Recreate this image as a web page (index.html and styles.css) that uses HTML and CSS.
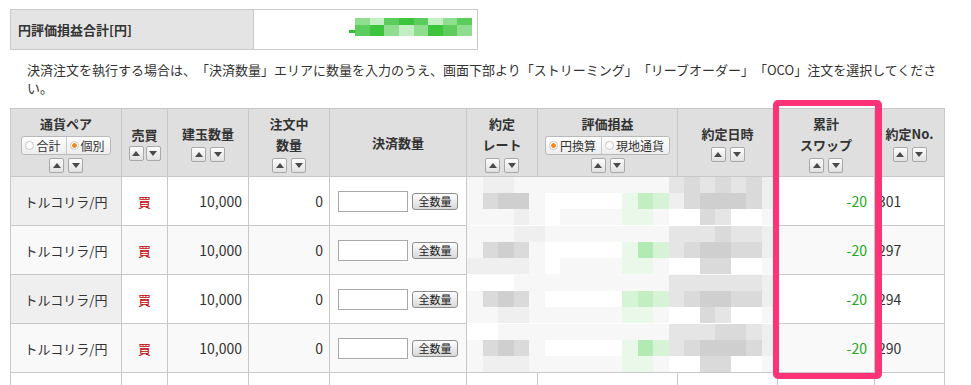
FILE: index.html
```html
<!DOCTYPE html>
<html lang="ja">
<head>
<meta charset="utf-8">
<title>建玉一覧</title>
<link rel="stylesheet" href="styles.css">
</head>
<body>
<div class="summary">
  <div class="sum-label">円評価損益合計[円]</div>
  <div class="sum-value">
    <span class="dash"></span>
    <div class="pix">
      <i class="p1"></i><i class="p3"></i><i class="p2"></i><i class="p4"></i><i class="p2"></i><i class="p3"></i><i class="p1"></i><i class="p2"></i>
      <i class="p2"></i><i class="p4"></i><i class="p1"></i><i class="p3"></i><i class="p1"></i><i class="p4"></i><i class="p2"></i><i class="p1"></i>
    </div>
  </div>
</div>

<p class="note">決済注文を執行する場合は、「決済数量」エリアに数量を入力のうえ、画面下部より「ストリーミング」「リーブオーダー」「OCO」注文を選択してください。</p>

<div class="board">
  <table class="positions">
    <colgroup>
      <col class="c-pair"><col class="c-side"><col class="c-qty"><col class="c-ord"><col class="c-settle">
      <col class="c-rate"><col class="c-pl"><col class="c-date"><col class="c-swap"><col class="c-no">
    </colgroup>
    <thead>
      <tr>
        <th>
          <div class="ttl">通貨ペア</div>
          <div class="seg"><span><b class="dot"></b>合計</span><span><b class="dot on"></b>個別</span></div>
          <div class="sort"><i class="up"></i><i class="down"></i></div>
        </th>
        <th>
          <div class="ttl">売買</div>
          <div class="sort tight"><i class="up"></i><i class="down"></i></div>
        </th>
        <th>
          <div class="ttl">建玉数量</div>
          <div class="sort"><i class="up"></i><i class="down"></i></div>
        </th>
        <th>
          <div class="ttl">注文中<br>数量</div>
          <div class="sort"><i class="up"></i><i class="down"></i></div>
        </th>
        <th>
          <div class="ttl">決済数量</div>
        </th>
        <th>
          <div class="ttl">約定<br>レート</div>
          <div class="sort"><i class="up"></i><i class="down"></i></div>
        </th>
        <th>
          <div class="ttl">評価損益</div>
          <div class="seg"><span><b class="dot on"></b>円換算</span><span><b class="dot"></b>現地通貨</span></div>
          <div class="sort"><i class="up"></i><i class="down"></i></div>
        </th>
        <th>
          <div class="ttl">約定日時</div>
          <div class="sort"><i class="up"></i><i class="down"></i></div>
        </th>
        <th>
          <div class="ttl">累計<br>スワップ</div>
          <div class="sort"><i class="up"></i><i class="down"></i></div>
        </th>
        <th>
          <div class="ttl">約定No.</div>
          <div class="sort"><i class="up"></i><i class="down"></i></div>
        </th>
      </tr>
    </thead>
    <tbody>
      <tr>
        <td class="pair">トルコリラ/円</td>
        <td class="side">買</td>
        <td class="num">10,000</td>
        <td class="num">0</td>
        <td class="settle"><div class="settle-box"><input class="qty" type="text"><button class="all" type="button">全数量</button></div></td>
        <td class="mosaic join" colspan="3"><div class="mz">
          <i class="a"></i><i class="b"></i><i class="b"></i><i class="a"></i><i class="a"></i><i class="a"></i><i class="a"></i><i class="a"></i><i class="a"></i><i class="a"></i><i class="a"></i><i class="a"></i><i class="a"></i><i class="c"></i><i class="d"></i><i class="c"></i><i class="d"></i><i class="c"></i><i class="d"></i><i class="b"></i>
          <i class="a"></i><i class="d"></i><i class="e"></i><i class="e"></i><i class="a"></i><i class="w"></i><i class="w"></i><i class="w"></i><i class="w"></i><i class="w"></i><i class="g"></i><i class="k"></i><i class="h"></i><i class="b"></i><i class="d"></i><i class="e"></i><i class="e"></i><i class="e"></i><i class="d"></i><i class="b"></i>
          <i class="a"></i><i class="a"></i><i class="a"></i><i class="b"></i><i class="a"></i><i class="w"></i><i class="a"></i><i class="a"></i><i class="a"></i><i class="a"></i><i class="g"></i><i class="g"></i><i class="a"></i><i class="w"></i><i class="w"></i><i class="d"></i><i class="c"></i><i class="w"></i><i class="w"></i><i class="a"></i>
        </div></td>
        <td class="swap">-20</td>
        <td class="no">301</td>
      </tr>
      <tr>
        <td class="pair">トルコリラ/円</td>
        <td class="side">買</td>
        <td class="num">10,000</td>
        <td class="num">0</td>
        <td class="settle"><div class="settle-box"><input class="qty" type="text"><button class="all" type="button">全数量</button></div></td>
        <td class="mosaic join" colspan="3"><div class="mz">
          <i class="a"></i><i class="a"></i><i class="a"></i><i class="b"></i><i class="b"></i><i class="a"></i><i class="a"></i><i class="a"></i><i class="a"></i><i class="a"></i><i class="a"></i><i class="a"></i><i class="a"></i><i class="c"></i><i class="c"></i><i class="c"></i><i class="d"></i><i class="c"></i><i class="c"></i><i class="b"></i>
          <i class="a"></i><i class="d"></i><i class="e"></i><i class="d"></i><i class="a"></i><i class="w"></i><i class="w"></i><i class="w"></i><i class="w"></i><i class="w"></i><i class="g"></i><i class="m"></i><i class="h"></i><i class="c"></i><i class="d"></i><i class="e"></i><i class="e"></i><i class="d"></i><i class="d"></i><i class="b"></i>
          <i class="b"></i><i class="b"></i><i class="b"></i><i class="b"></i><i class="a"></i><i class="w"></i><i class="a"></i><i class="a"></i><i class="a"></i><i class="a"></i><i class="g"></i><i class="g"></i><i class="a"></i><i class="w"></i><i class="w"></i><i class="d"></i><i class="d"></i><i class="w"></i><i class="w"></i><i class="a"></i>
        </div></td>
        <td class="swap">-20</td>
        <td class="no">297</td>
      </tr>
      <tr>
        <td class="pair">トルコリラ/円</td>
        <td class="side">買</td>
        <td class="num">10,000</td>
        <td class="num">0</td>
        <td class="settle"><div class="settle-box"><input class="qty" type="text"><button class="all" type="button">全数量</button></div></td>
        <td class="mosaic join" colspan="3"><div class="mz">
          <i class="w"></i><i class="w"></i><i class="w"></i><i class="a"></i><i class="a"></i><i class="a"></i><i class="a"></i><i class="a"></i><i class="a"></i><i class="a"></i><i class="a"></i><i class="a"></i><i class="a"></i><i class="c"></i><i class="c"></i><i class="c"></i><i class="c"></i><i class="c"></i><i class="c"></i><i class="b"></i>
          <i class="a"></i><i class="d"></i><i class="e"></i><i class="d"></i><i class="a"></i><i class="w"></i><i class="w"></i><i class="w"></i><i class="w"></i><i class="w"></i><i class="h"></i><i class="k"></i><i class="h"></i><i class="c"></i><i class="d"></i><i class="e"></i><i class="e"></i><i class="d"></i><i class="d"></i><i class="b"></i>
          <i class="a"></i><i class="a"></i><i class="b"></i><i class="b"></i><i class="a"></i><i class="a"></i><i class="a"></i><i class="a"></i><i class="a"></i><i class="a"></i><i class="g"></i><i class="g"></i><i class="a"></i><i class="w"></i><i class="w"></i><i class="d"></i><i class="c"></i><i class="w"></i><i class="w"></i><i class="a"></i>
        </div></td>
        <td class="swap">-20</td>
        <td class="no">294</td>
      </tr>
      <tr>
        <td class="pair">トルコリラ/円</td>
        <td class="side">買</td>
        <td class="num">10,000</td>
        <td class="num">0</td>
        <td class="settle"><div class="settle-box"><input class="qty" type="text"><button class="all" type="button">全数量</button></div></td>
        <td class="mosaic" colspan="3"><div class="mz">
          <i class="w"></i><i class="w"></i><i class="a"></i><i class="a"></i><i class="a"></i><i class="a"></i><i class="a"></i><i class="a"></i><i class="a"></i><i class="a"></i><i class="a"></i><i class="a"></i><i class="a"></i><i class="c"></i><i class="c"></i><i class="c"></i><i class="d"></i><i class="d"></i><i class="c"></i><i class="b"></i>
          <i class="a"></i><i class="d"></i><i class="e"></i><i class="d"></i><i class="a"></i><i class="w"></i><i class="w"></i><i class="w"></i><i class="w"></i><i class="w"></i><i class="g"></i><i class="m"></i><i class="h"></i><i class="c"></i><i class="d"></i><i class="e"></i><i class="e"></i><i class="e"></i><i class="d"></i><i class="b"></i>
          <i class="a"></i><i class="b"></i><i class="b"></i><i class="b"></i><i class="a"></i><i class="a"></i><i class="a"></i><i class="a"></i><i class="a"></i><i class="a"></i><i class="g"></i><i class="g"></i><i class="a"></i><i class="w"></i><i class="w"></i><i class="d"></i><i class="d"></i><i class="w"></i><i class="w"></i><i class="a"></i>
        </div></td>
        <td class="swap">-20</td>
        <td class="no">290</td>
      </tr>
      <tr class="more">
        <td></td><td></td><td></td><td></td><td></td>
        <td></td><td></td><td></td><td></td><td></td>
      </tr>
    </tbody>
  </table>
  <div class="highlight"></div>
</div>
</body>
</html>
```

FILE: styles.css
```css
body {
  margin: 9px 10px 0;
  font-family: "Noto Sans CJK JP", "Noto Sans", sans-serif;
  font-size: 13px;
  color: #333;
  background: #fff;
  text-spacing-trim: space-all;
}

/* total box */
.summary {
  display: flex;
  width: 468px;
  height: 41px;
  box-sizing: border-box;
  border: 1px solid #c9c9c9;
}
.sum-label {
  width: 243px;
  box-sizing: border-box;
  background: #e4e4e4;
  border-right: 1px solid #c9c9c9;
  font-weight: bold;
  display: flex;
  align-items: center;
  padding-left: 7px;
}
.sum-value {
  flex: 1;
  display: flex;
  justify-content: flex-end;
  align-items: flex-start;
  padding: 8px 5px 0 0;
}
.dash {
  width: 6px;
  height: 3px;
  margin-top: 12px;
  background: #2fbf2f;
}
.pix {
  width: 117px;
  height: 18px;
  display: grid;
  grid-template-columns: repeat(8, 1fr);
  grid-template-rows: 7px 11px;
}
.pix i { display: block; }
.pix .p1 { background: #8fdd8f; }
.pix .p2 { background: #5ccd5c; }
.pix .p3 { background: #c4eec4; }
.pix .p4 { background: #3cc43c; }

/* instruction text */
.note {
  margin: 11px 0 11px;
  padding-left: 17px;
  width: 916px;
  line-height: 18px;
}

/* position table */
.board {
  position: relative;
  width: 934px;
}
.positions {
  border-collapse: collapse;
  table-layout: fixed;
  width: 934px;
}
.c-pair { width: 111px; }
.c-side { width: 46px; }
.c-qty { width: 81px; }
.c-ord { width: 81px; }
.c-settle { width: 137px; }
.c-rate { width: 71px; }
.c-pl { width: 140px; }
.c-date { width: 100px; }
.c-swap { width: 97px; }
.c-no { width: 70px; }

.positions th,
.positions td {
  border: 1px solid #c8c8c8;
  padding: 0;
}
.positions th {
  height: 67px;
  background: #dfdfdf;
  font-weight: bold;
  text-align: center;
  vertical-align: middle;
  line-height: 21px;
}
.positions td {
  height: 48px;
  vertical-align: middle;
  background: #fff;
}
.positions tbody tr:nth-child(even) td {
  background: #f9f9f9;
}
.positions tbody td.pair {
  background: #efefef;
  text-align: center;
}
.positions tbody tr.more td {
  background: #fff;
}
.side {
  color: #c40000;
  text-align: center;
}
.num {
  text-align: right;
  font-size: 14px;
  padding-right: 6px !important;
}
.swap {
  color: #22a722;
  text-align: right;
  font-size: 14px;
  padding-right: 7px !important;
}
.no {
  font-size: 14px;
  padding-left: 3px !important;
}

/* sort arrows */
.sort {
  display: flex;
  justify-content: center;
  gap: 4px;
  margin-top: 3px;
}
.sort.tight { gap: 2px; margin-top: 1px; }
.sort i {
  width: 15px;
  height: 15px;
  box-sizing: border-box;
  border: 1px solid #a8a8a8;
  border-radius: 2px;
  background: linear-gradient(#fdfdfd, #e0e0e0);
  display: flex;
  align-items: center;
  justify-content: center;
}
.sort i::after {
  content: "";
  border-left: 4px solid transparent;
  border-right: 4px solid transparent;
}
.sort .up::after { border-bottom: 5px solid #4a4a4a; }
.sort .down::after { border-top: 5px solid #4a4a4a; }

/* toggle groups */
.seg {
  display: inline-flex;
  height: 19px;
  box-sizing: border-box;
  margin-top: 1px;
  border: 1px solid #b9b9b9;
  border-radius: 3px;
  background: linear-gradient(#fefefe, #ededed);
  font-weight: normal;
  font-size: 12px;
  line-height: 17px;
  color: #333;
}
.seg span {
  display: flex;
  align-items: center;
  gap: 2px;
  padding: 0 5px 0 3px;
}
.seg span + span { border-left: 1px solid #c9c9c9; }
.dot {
  width: 9px;
  height: 9px;
  box-sizing: border-box;
  border: 1px solid #c6c6c6;
  border-radius: 50%;
  background: #fff;
}
.dot.on {
  background: radial-gradient(circle, #f0871c 0 2px, #fff 2.6px);
}

/* settle quantity input */
.settle-box {
  display: flex;
  align-items: center;
  padding-left: 8px;
}
.qty {
  width: 70px;
  height: 21px;
  box-sizing: border-box;
  border: 1px solid #a9a9a9;
  background: #fff;
  margin: 0;
}
.all {
  width: 46px;
  height: 17px;
  margin: 0 0 0 4px;
  padding: 0;
  box-sizing: border-box;
  border: 1px solid #8e8e8e;
  border-radius: 3px;
  background: linear-gradient(#fefefe, #d8d8d8);
  font-family: inherit;
  font-size: 11px;
  line-height: 15px;
  color: #222;
}

/* masked rate / profit / date block */
.positions td.mosaic {
  background: #fff;
}
.positions td.mosaic.join {
  border-bottom-style: hidden;
}
.mz {
  display: grid;
  grid-template-columns: repeat(20, 1fr);
  grid-template-rows: repeat(3, 16px);
}
.mz i { display: block; }
.mz .w { background: #ffffff; }
.mz .a { background: #f7f7f7; }
.mz .b { background: #efefef; }
.mz .c { background: #e5e5e5; }
.mz .d { background: #dadada; }
.mz .e { background: #cfcfcf; }
.mz .g { background: #eaf8ea; }
.mz .h { background: #d6f3d6; }
.mz .k { background: #c2eec2; }
.mz .m { background: #b3eab3; }

/* column highlight frame */
.highlight {
  position: absolute;
  left: 763px;
  top: -8px;
  width: 109px;
  height: 279px;
  box-sizing: border-box;
  border: 6px solid #fe3377;
  border-right-width: 7px;
  border-radius: 5px;
  pointer-events: none;
}
```
